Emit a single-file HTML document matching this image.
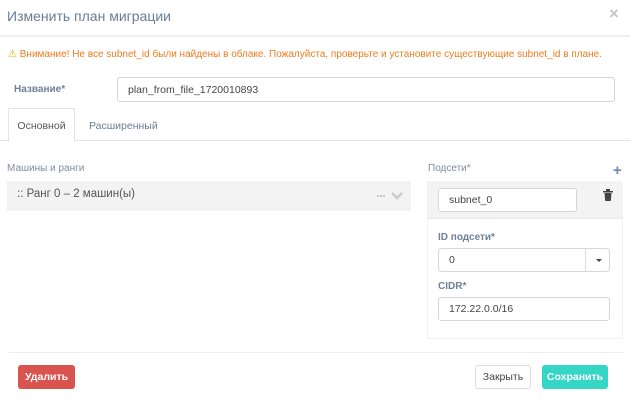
<!DOCTYPE html>
<html><head><meta charset="utf-8"><style>
*{box-sizing:border-box;margin:0;padding:0}
body{width:630px;height:417px;background:#fff;font-family:"Liberation Sans",sans-serif;position:relative;overflow:hidden;color:#333}
.a{position:absolute}
.inp{position:absolute;border:1px solid #d6d6d6;border-radius:3px;background:#fff;font-size:10.5px;color:#444;padding-left:10px;display:flex;align-items:center}
.lbl{position:absolute;font-size:10px;color:#6f8197;font-weight:bold}
.btn{position:absolute;border-radius:3px;font-size:10.5px;display:flex;align-items:center;justify-content:center}
</style></head><body>
<div class="a" style="left:7px;top:8px;font-size:14px;color:#6c7d93">Изменить план миграции</div>
<div class="a" style="left:609px;top:4px;font-size:17px;color:#c8c8c8;font-weight:bold">×</div>
<div class="a" style="left:0;top:35px;width:630px;height:2px;background:#f0f0f0"></div>
<div class="a" style="left:8px;top:49px;font-size:10px;color:#f07c1c;white-space:nowrap"><span style="color:#e8a800">⚠</span> Внимание! Не все subnet_id были найдены в облаке. Пожалуйста, проверьте и установите существующие subnet_id в плане.</div>
<div class="lbl" style="left:14px;top:84px">Название*</div>
<div class="inp" style="left:117px;top:77px;width:498px;height:25px">plan_from_file_1720010893</div>
<div class="a" style="left:0;top:140px;width:630px;height:1px;background:#e4e4e4"></div>
<div class="a" style="left:8px;top:108px;width:67px;height:34px;border:1px solid #e4e4e4;border-bottom:none;background:#fff;font-size:10.5px;color:#555;display:flex;align-items:center;justify-content:center">Основной</div>
<div class="a" style="left:89px;top:120px;font-size:10.5px;color:#6c7d93">Расширенный</div>
<div class="a" style="left:7px;top:163px;font-size:10px;color:#7d8da0">Машины и ранги</div>
<div class="a" style="left:7px;top:181px;width:404px;height:30px;background:#f3f3f3"></div>
<div class="a" style="left:17px;top:188px;font-size:11.5px;color:#555">:: Ранг 0 – 2 машин(ы)</div>
<div class="a" style="left:377px;top:195px;width:8px;height:2px;border-top:2px dotted #c8c8c8"></div>
<svg class="a" style="left:391px;top:192px" width="12" height="8"><path d="M1 1L6 6L11 1" stroke="#ccc" stroke-width="2.5" fill="none"/></svg>
<div class="a" style="left:428px;top:163px;font-size:10px;color:#7d8da0">Подсети*</div>
<div class="a" style="left:613px;top:162px;font-size:15px;font-weight:bold;color:#6c8aa8">+</div>
<div class="a" style="left:427px;top:181px;width:196px;height:158px;border:1px solid #f0f0f0"></div>
<div class="a" style="left:427px;top:181px;width:196px;height:38px;background:#f3f3f3;border-bottom:1px solid #e8e8e8"></div>
<div class="inp" style="left:438px;top:188px;width:139px;height:24px">subnet_0</div>
<svg class="a" style="left:603px;top:189px" width="10" height="12"><rect x="0" y="2" width="10" height="1.5" fill="#444"/><rect x="3" y="0" width="4" height="2" fill="#444"/><path d="M1.5 4h7l-.7 8h-5.6z" fill="#444"/></svg>
<div class="lbl" style="left:438px;top:232px">ID подсети*</div>
<div class="inp" style="left:438px;top:248px;width:172px;height:24px">0</div>
<div class="a" style="left:585px;top:249px;width:1px;height:22px;background:#ddd"></div>
<div class="a" style="left:596px;top:259px;border-left:3px solid transparent;border-right:3px solid transparent;border-top:3px solid #444"></div>
<div class="lbl" style="left:438px;top:281px">CIDR*</div>
<div class="inp" style="left:438px;top:297px;width:172px;height:24px">172.22.0.0/16</div>
<div class="a" style="left:7px;top:352px;width:616px;height:1px;background:#eee"></div>
<div class="btn" style="left:18px;top:365px;width:57px;height:24px;background:#d9534f;color:#fff;font-weight:bold">Удалить</div>
<div class="btn" style="left:475px;top:365px;width:56px;height:24px;border:1px solid #ddd;color:#444">Закрыть</div>
<div class="btn" style="left:542px;top:365px;width:66px;height:24px;background:#35d6c6;color:#fff;font-weight:bold">Сохранить</div>
</body></html>
